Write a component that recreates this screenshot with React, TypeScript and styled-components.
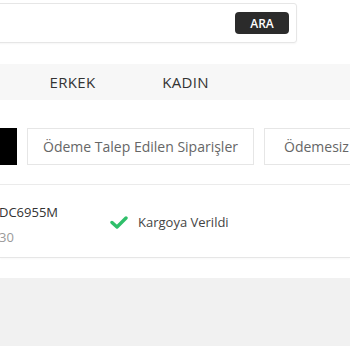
import * as React from 'react';
import styled, { createGlobalStyle } from 'styled-components';

const GlobalStyle = createGlobalStyle`
  html, body {
    margin: 0;
    padding: 0;
    background: #ffffff;
    font-family: 'Open Sans', 'Liberation Sans', sans-serif;
    overflow: hidden;
  }
`;

const Page = styled.div`
  width: 350px;
  height: 350px;
  overflow: hidden;
  display: flex;
  flex-direction: column;
`;

const SearchRow = styled.div`
  display: flex;
  padding-top: 3px;
`;

const SearchBox = styled.div`
  width: 340px;
  height: 40px;
  margin-left: -43px;
  box-sizing: border-box;
  border: 1px solid #e6e6e6;
  border-radius: 3px;
  box-shadow: 0 1px 2px rgba(0, 0, 0, 0.04);
  display: flex;
  align-items: center;
  justify-content: flex-end;
  padding-right: 7px;
`;

const SearchButton = styled.button`
  width: 54px;
  height: 22px;
  border: none;
  border-radius: 4px;
  background: #2b2b2b;
  color: #ffffff;
  font-family: inherit;
  font-size: 12px;
  font-weight: 600;
  padding: 0;
  cursor: pointer;
`;

const NavBar = styled.nav`
  margin-top: 21px;
  height: 36px;
  background: #f7f7f7;
  display: flex;
  align-items: center;
  padding-left: 16px;
`;

const NavItem = styled.a`
  width: 113px;
  text-align: center;
  font-size: 15px;
  color: #333333;
  letter-spacing: 0.3px;
  text-decoration: none;
`;

const Tabs = styled.div`
  margin-top: 28px;
  display: flex;
  gap: 10px;
  margin-left: -133px;
`;

const Tab = styled.div<{ $active?: boolean; $width?: number }>`
  flex-shrink: 0;
  height: 37px;
  box-sizing: border-box;
  width: ${(p) => (p.$width ? `${p.$width}px` : 'auto')};
  padding: 0 19px;
  display: flex;
  align-items: center;
  justify-content: ${(p) => (p.$width ? 'center' : 'flex-start')};
  border: 1px solid ${(p) => (p.$active ? '#000000' : '#e6e6e6')};
  background: ${(p) => (p.$active ? '#000000' : '#ffffff')};
  color: ${(p) => (p.$active ? '#ffffff' : '#666666')};
  font-size: 14px;
  white-space: nowrap;
`;

const OrderList = styled.div`
  margin-top: 19px;
  border-top: 1px solid #ebebeb;
`;

const OrderRow = styled.div`
  height: 73px;
  box-sizing: border-box;
  border-bottom: 1px solid #e6e6e6;
  box-shadow: 0 1px 2px rgba(0, 0, 0, 0.03);
  display: flex;
  align-items: center;
`;

const OrderInfo = styled.div`
  width: 111px;
  margin-left: -1px;
  display: flex;
  flex-direction: column;
  gap: 7px;
  margin-top: 6px;
`;

const OrderCode = styled.div`
  font-size: 13px;
  color: #333333;
`;

const OrderTime = styled.div`
  font-size: 13px;
  color: #9a9a9a;
`;

const Status = styled.div`
  display: flex;
  align-items: center;
  gap: 10px;
  font-size: 13px;
  color: #444444;
  margin-top: 2px;
`;

const GreyBlock = styled.div`
  margin-top: 20px;
  height: 68px;
  background: #f1f1f1;
`;

const CheckIcon = () => (
  <svg width="18" height="13" viewBox="0 0 18 13">
    <path d="M2 6.5 L7 11 L16 2" fill="none" stroke="#2fbf6a" strokeWidth="3.4" strokeLinecap="round" strokeLinejoin="round" />
  </svg>
);

export default function App() {
  return (
    <Page>
      <GlobalStyle />
      <SearchRow>
        <SearchBox>
          <SearchButton>ARA</SearchButton>
        </SearchBox>
      </SearchRow>
      <NavBar>
        <NavItem>ERKEK</NavItem>
        <NavItem>KADIN</NavItem>
      </NavBar>
      <Tabs>
        <Tab $active $width={150}>Tüm Siparişler</Tab>
        <Tab $width={227}>Ödeme Talep Edilen Siparişler</Tab>
        <Tab>Ödemesiz Siparişler</Tab>
      </Tabs>
      <OrderList>
        <OrderRow>
          <OrderInfo>
            <OrderCode>DC6955M</OrderCode>
            <OrderTime>30</OrderTime>
          </OrderInfo>
          <Status>
            <CheckIcon />
            Kargoya Verildi
          </Status>
        </OrderRow>
      </OrderList>
      <GreyBlock />
    </Page>
  );
}
